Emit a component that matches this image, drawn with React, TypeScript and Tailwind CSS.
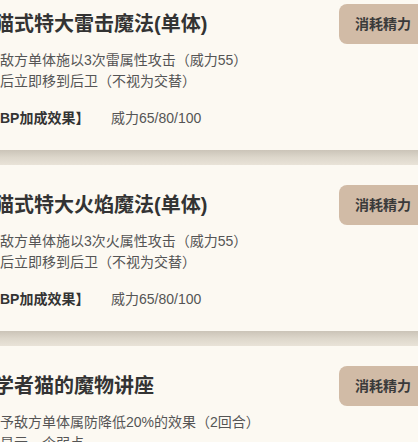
import React from "react";

type Skill = {
  title: string;
  lines: string[];
  bp?: string;
};

const skills: Skill[] = [
  {
    title: "猫式特大雷击魔法(单体)",
    lines: ["对敌方单体施以3次雷属性攻击（威力55）", "随后立即移到后卫（不视为交替）"],
    bp: "威力65/80/100",
  },
  {
    title: "猫式特大火焰魔法(单体)",
    lines: ["对敌方单体施以3次火属性攻击（威力55）", "随后立即移到后卫（不视为交替）"],
    bp: "威力65/80/100",
  },
  {
    title: "学者猫的魔物讲座",
    lines: ["赋予敌方单体属防降低20%的效果（2回合）", "并显示一个弱点"],
    bp: "威力65/80/100",
  },
];

function Card({ s }: { s: Skill }) {
  return (
    <div className="bg-[#fcf9f2] pt-[20px] pb-[21px]">
      <div className="flex items-center justify-between mr-[-9px]">
        <div className="ml-[-6px] text-[20px] leading-[28px] font-bold text-[#333333] whitespace-nowrap">
          {s.title}
        </div>
        <div className="h-[40px] w-[88px] shrink-0 rounded-[8px] bg-[#d1bba6] flex items-center justify-center text-[14px] font-bold text-[#3a3a3a]">
          消耗精力
        </div>
      </div>
      <div className="ml-[-14px] mt-[6px] text-[14px] leading-[21px] text-[#555555]">
        {s.lines.map((l, i) => (
          <div key={i} className="whitespace-nowrap">
            {l}
          </div>
        ))}
      </div>
      {s.bp && (
        <div className="ml-[-14px] mt-[16px] flex text-[14px] leading-[21px]">
          <div className="w-[125px] shrink-0 font-bold text-[#333333]">【BP加成效果】</div>
          <div className="text-[#555555]">{s.bp}</div>
        </div>
      )}
    </div>
  );
}

export default function App() {
  return (
    <div
      className="w-full h-[442px] overflow-hidden bg-[#fcf9f2]"
      style={{ fontFamily: '"Liberation Sans", "Noto Sans CJK SC", sans-serif' }}
    >
      <div className="mt-[-16px] flex flex-col">
        <Card s={skills[0]} />
        <div className="h-[15px] bg-gradient-to-b from-[#cbc4b8] via-[#ddd7cb] to-[#e9e3d8]" />
        <Card s={skills[1]} />
        <div className="h-[15px] bg-gradient-to-b from-[#cbc4b8] via-[#ddd7cb] to-[#e9e3d8]" />
        <Card s={skills[2]} />
      </div>
    </div>
  );
}
